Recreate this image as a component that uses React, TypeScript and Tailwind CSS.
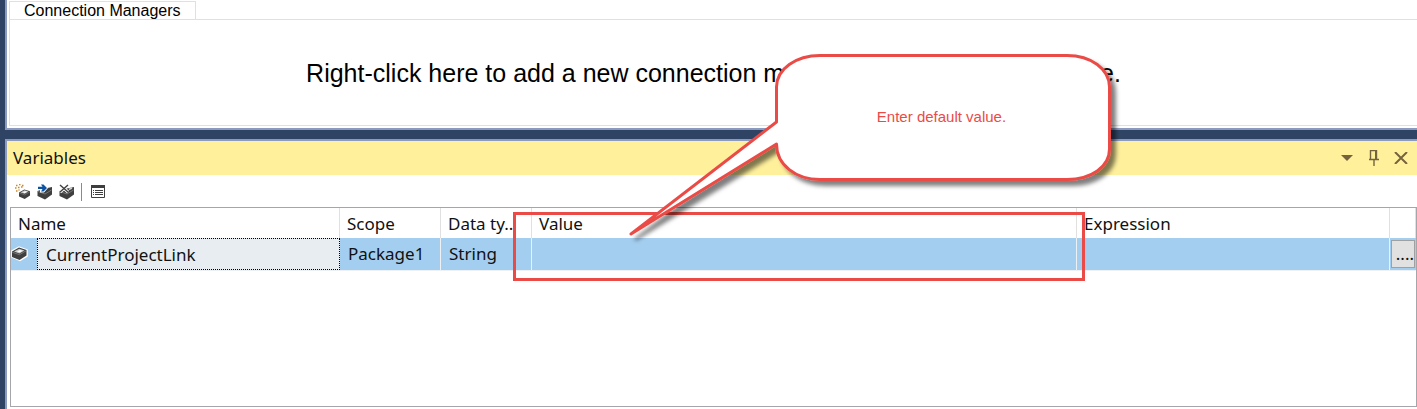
import React from "react";

const INK = "#3f3f3f";

function Cube({ x = 0, y = 0 }: { x?: number; y?: number }) {
  return (
    <g transform={`translate(${x} ${y})`}>
      <path d="M0 4.500 7 0.500l7.500 2.500v5.500L7.500 13 0 10z" fill={INK} />
      <path d="M2 4.600 7.200 1.700l5.300 1.700-5 3z" fill="#c9c9c9" />
      <path d="M5 4.500 8 2.900l2.600.8-2.800 1.600z" fill="#fff" />
      <path d="M.2 5.200 7.500 7.700l6.800-4" fill="none" stroke="#9a9a9a" strokeWidth=".6" />
    </g>
  );
}

// Cube without the bright lid, used under the arrow and the cross
function DarkCube() {
  return <path d="M.5 7 8 4.500l7-1.500v7.500L8 15.500.5 12z" fill={INK} />;
}

function AddVariableIcon() {
  return (
    <svg width="16" height="16" viewBox="0 0 16 16">
      <g transform="translate(4 5) scale(.76)">
        <Cube />
      </g>
      <path
        d="M1 1.500h1.500M4 .5h1.500M7 1.500h1.500M0 4h1.500M3 3.500h1.500M6 3h1.500M1 7h1.500M3.500 6h1"
        stroke="#c98a2e"
        strokeWidth="1.3"
      />
    </svg>
  );
}

function MoveVariableIcon() {
  return (
    <svg width="16" height="16" viewBox="0 0 16 16">
      <DarkCube />
      <path d="M1 7.500 8 10l6.500-4" fill="none" stroke="#9a9a9a" strokeWidth=".6" />
      <path d="M0 2h3V0h4l4 4-4 4.500H3V6H0z" fill="#fff" />
      <path d="M1 2.800h4.500L4 .5h2.500L10 4 6.500 7.500H4L5.500 5H1z" fill="#0b53a5" />
    </svg>
  );
}

function DeleteVariableIcon() {
  return (
    <svg width="16" height="16" viewBox="0 0 16 16">
      <DarkCube />
      <path d="M1 7.500 8 10l6.500-4" fill="none" stroke="#9a9a9a" strokeWidth=".6" />
      <path d="M1 1l8 7M9 1 1 8" stroke="#fff" strokeWidth="3" />
      <path d="M1 1l8 7M9 1 1 8" stroke={INK} strokeWidth="1.4" />
      <path d="M10 5.500l3-1.500" stroke="#d0d0d0" strokeWidth="1.500" />
    </svg>
  );
}

function GridOptionsIcon() {
  return (
    <svg width="14" height="14" viewBox="0 0 14 14" fill="none" stroke={INK}>
      <path d="M.5.5h13v12H.5z" />
      <path d="M0 1.500h14" strokeWidth="3" />
      <path d="M2 5.500h1M4 5.500h8M2 7.500h1M4 7.500h8M2 9.500h1M4 9.500h8" />
    </svg>
  );
}

const TOOLS = [
  { label: "Add variable", icon: <AddVariableIcon /> },
  { label: "Move variable", icon: <MoveVariableIcon /> },
  { label: "Delete variable", icon: <DeleteVariableIcon /> },
];

function ConnectionManagers() {
  return (
    <section className="flex h-[130px] flex-col border-b-2 border-l-2 border-[#8c9ac0] bg-white pl-0.5 font-['Liberation_Sans',sans-serif] text-black">
      <h2 className="mt-px h-[18px] w-[187px] border border-b-0 border-[#e0e0e0] pl-3.5 text-[16px] leading-[18px] whitespace-nowrap">
        Connection Managers
      </h2>
      <div className="mb-0.5 flex flex-1 items-center justify-center border border-r-0 border-[#e0e0e0]">
        <p className="flex gap-6 text-[25px] leading-7 whitespace-nowrap">
          <span>Right-click here to add a new connection manager</span>
          <span>to the SSIS package.</span>
        </p>
      </div>
    </section>
  );
}

function TitleBar() {
  return (
    <header className="flex h-[34px] items-center justify-between bg-[#fff09c] pr-2 pl-1.5">
      <h2 className="text-[17px] leading-6">Variables</h2>
      <div className="flex items-center gap-[11px] text-[#75633d]">
        <button aria-label="Window position" className="flex w-4 justify-center">
          <svg width="12" height="6" viewBox="0 0 12 6">
            <path d="M0 0h12L6 6z" fill="currentColor" />
          </svg>
        </button>
        <button aria-label="Auto hide" className="flex w-4 justify-center">
          <svg width="12" height="16" viewBox="0 0 12 16" fill="none" stroke="currentColor">
            <path d="M2.500 9V.5h6V9M1 9.500h10M6 10v6" strokeWidth="1.4" />
            <path d="M8 1v8" strokeWidth="2" />
          </svg>
        </button>
        <button aria-label="Close" className="flex w-4 justify-center">
          <svg width="14" height="12" viewBox="0 0 14 12">
            <path d="M1 0l12 12M13 0 1 12" stroke="currentColor" strokeWidth="2" />
          </svg>
        </button>
      </div>
    </header>
  );
}

function Toolbar() {
  return (
    <div className="flex h-8 items-center gap-1.5 pt-0.5 pl-2">
      {TOOLS.map((tool) => (
        <button key={tool.label} aria-label={tool.label}>
          {tool.icon}
        </button>
      ))}
      <div className="h-[18px] w-px bg-[#8a8a8a]" />
      <button aria-label="Grid options" className="ml-[3px]">
        <GridOptionsIcon />
      </button>
    </div>
  );
}

function VariablesTable() {
  return (
    <table className="w-full table-fixed border-separate border-spacing-0 text-left text-[17px] leading-6 whitespace-nowrap">
      <colgroup>
        <col className="w-[26px]" />
        <col className="w-[303px]" />
        <col className="w-[101px]" />
        <col className="w-[91px]" />
        <col className="w-[545px]" />
        <col />
        <col className="w-[26px]" />
      </colgroup>
      <thead>
        <tr className="h-[30px] [&>th]:border-r [&>th]:border-[#e0e0e0] [&>th]:pt-0.5 [&>th]:pl-[7px] [&>th]:font-normal">
          <th colSpan={2}>Name</th>
          <th>Scope</th>
          <th>Data ty..</th>
          <th>Value</th>
          <th>Expression</th>
          <th aria-label="Edit" className="border-r-0" />
        </tr>
      </thead>
      <tbody>
        <tr className="h-8 bg-[#a4cef0] [&>td]:border-b [&>td]:border-[#eef1f4] [&>td]:p-0">
          <td>
            <svg width="18" height="16" viewBox="-1 0 18 16" aria-label="Variable">
              <path d="M0 5 7 1l8 3v6l-7 4.500L0 11z" fill="#fff" stroke="#fff" strokeWidth="1.5" />
              <Cube y={1} />
            </svg>
          </td>
          <td className="h-8">
            <div className="h-8 border border-dotted border-black bg-[#e8edf1] pl-2 leading-8">
              CurrentProjectLink
            </div>
          </td>
          <td className="border-r">
            <span className="pl-2">Package1</span>
          </td>
          <td className="border-r">
            <span className="pl-2">String</span>
          </td>
          <td className="border-r" />
          <td className="border-r" />
          <td>
            <button
              aria-label="Edit expression"
              className="ml-px flex h-7 w-6 items-center justify-end border border-[#a0a0a0] bg-[#e1e1e1] text-[17px] leading-6"
            >
              ....
            </button>
          </td>
        </tr>
      </tbody>
    </table>
  );
}

function Callout() {
  return (
    <div className="pointer-events-none absolute top-[45px] left-[620px] h-[205px] w-[510px]">
      <svg width="510" height="205" viewBox="620 45 510 205">
        <defs>
          <filter id="shadow" x="-10%" y="-10%" width="120%" height="125%">
            <feDropShadow dx="5" dy="5" stdDeviation="2" floodColor="#000" floodOpacity=".5" />
          </filter>
        </defs>
        <path
          d="M820 55.500H1067C1091 55.500 1109.500 69 1109.500 87V149C1109.500 167 1091 179.500 1067 179.500H820C796 179.500 776.500 165 776.500 144L631 234 776.500 122V87C776.500 69 796 55.500 820 55.500Z"
          fill="#fff"
          stroke="#ea4b46"
          strokeWidth="3"
          strokeLinejoin="round"
          filter="url(#shadow)"
        />
      </svg>
      <p className="absolute top-[62px] left-[157px] w-[329px] text-center font-['Liberation_Sans',sans-serif] text-[15px] leading-5 text-[#ea4b46]">
        Enter default value.
      </p>
    </div>
  );
}

export default function App() {
  return (
    <main className="relative min-h-screen overflow-hidden bg-[#2f4464] pl-[5px] font-['Noto_Sans',sans-serif] text-[#111111]">
      <ConnectionManagers />
      <section className="mt-[9px] border-t-2 border-l-2 border-[#8c9ac0] bg-white">
        <TitleBar />
        <Toolbar />
        <div className="relative ml-[3px] h-[200px] border border-[#a5a6ab]">
          <VariablesTable />
          <div className="pointer-events-none absolute top-1 left-[502px] h-[69px] w-[572px] border-3 border-[#ea4b46]" />
        </div>
        <div className="h-0.5" />
      </section>
      <Callout />
    </main>
  );
}
